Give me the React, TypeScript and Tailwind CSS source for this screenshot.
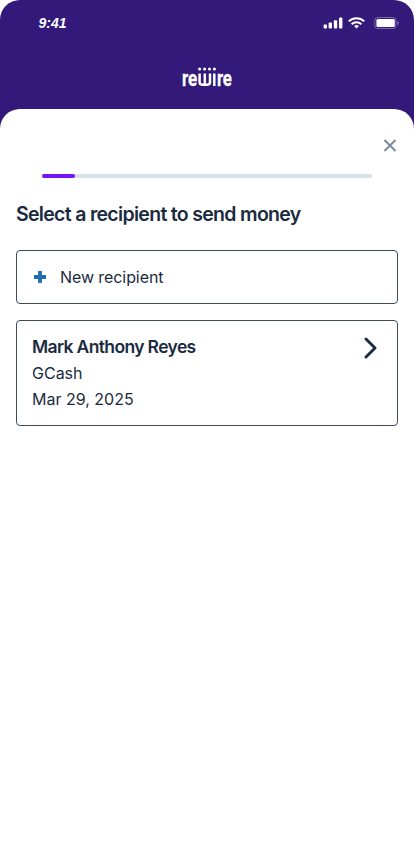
import React from 'react';

const recipients = [
  { id: 1, name: 'Mark Anthony Reyes', method: 'GCash', date: 'Mar 29, 2025' },
];

const StatusBar = () => (
  <div className="flex h-[46px] items-center justify-between pl-[38.5px] pr-[14px]">
    <span className="font-['Liberation_Sans'] text-[14px] font-bold italic leading-none text-white">9:41</span>
    <div className="flex items-center">
      <svg className="mr-[5px]" width="20" height="12" viewBox="0 0 20 12" fill="white">
        <rect x="0.6" y="7.5" width="3.4" height="4" rx="0.9" />
        <rect x="5.6" y="5.6" width="3.4" height="5.9" rx="0.9" />
        <rect x="10.8" y="3.3" width="3.4" height="8.2" rx="0.9" />
        <rect x="16" y="0.5" width="3.4" height="11" rx="0.9" />
      </svg>
      <svg className="mr-[9px]" width="17" height="12" viewBox="0 0 17 12" fill="none" stroke="white">
        <path d="M.8 4.3a11 11 0 0 1 15.4 0" strokeWidth="2" />
        <path d="M3.6 7.2a7 7 0 0 1 9.8 0" strokeWidth="1.9" />
        <path d="m8.5 11.5-2.4-2.4a3.6 3.6 0 0 1 4.8 0Z" fill="white" stroke="none" />
      </svg>
      <svg width="26" height="12" viewBox="0 0 26 12">
        <rect x="0.8" y="0.5" width="21.2" height="11" rx="3" fill="none" stroke="white" strokeOpacity="0.35" />
        <rect x="2.4" y="2" width="18.4" height="8" rx="1.5" fill="white" />
        <path d="M23.3 4v4c.9-.3 1.4-1.1 1.4-2s-.5-1.7-1.4-2Z" fill="white" fillOpacity="0.4" />
      </svg>
    </div>
  </div>
);

const Logo = () => (
  <svg
    className="mx-auto mt-[14px] block font-['Roboto']"
    width="60"
    height="34"
    viewBox="-4 -4 60 34"
    fill="white"
    role="img"
    aria-label="rewire"
  >
    <text x="1" y="22" fontSize="22.5" fontWeight="700" textLength="15.2" lengthAdjust="spacingAndGlyphs" stroke="white" strokeWidth="0.3">re</text>
    <path d="M18.6 9.5v8.6q0 2.6 2.6 2.6h5.2q2.6 0 2.6-2.6V9.5M23.8 9.5v11M33.3 9.5V22" fill="none" stroke="white" strokeWidth="2.5" />
    <circle cx="18.6" cy="5" r="1.5" />
    <circle cx="23.6" cy="5" r="1.5" />
    <circle cx="28.5" cy="5" r="1.5" />
    <circle cx="33.4" cy="5" r="1.5" />
    <text x="35.9" y="22" fontSize="22.5" fontWeight="700" textLength="15" lengthAdjust="spacingAndGlyphs" stroke="white" strokeWidth="0.3">re</text>
  </svg>
);

export default function App() {
  return (
    <div className="min-h-screen bg-white font-['Inter'] text-[#1b2b3f]">
      <div className="flex min-h-screen flex-col rounded-t-[20px] bg-[#32197a]">
        <header className="h-[109px]">
          <StatusBar />
          <Logo />
        </header>

        <main className="flex-1 rounded-t-[20px] bg-white px-4 pt-[30px]">
          <button className="ml-auto mr-[2px] block" aria-label="Close">
            <svg width="12" height="13" viewBox="0 0 12 13" fill="none" stroke="#7b8ba1" strokeWidth="2">
              <path d="m.5 1 11 11M11.5 1l-11 11" />
            </svg>
          </button>

          <div className="mx-[26px] mt-[22px] h-1 rounded-full bg-[#d9e0e9]">
            <div className="h-1 w-[33px] rounded-full bg-[#7414fb]" />
          </div>

          <h1 className="mt-[22px] text-[19.5px] font-semibold leading-7 tracking-[-0.69px]">
            Select a recipient to send money
          </h1>

          <button className="mt-[22px] flex h-[54px] w-full items-center rounded border border-[#3c4b60] pl-[17px]">
            <svg width="12" height="12" viewBox="0 0 12 12" stroke="#216cab" strokeWidth="3.8">
              <path d="M6 0v12M0 6h12" />
            </svg>
            <span className="ml-[14px] text-[16px] leading-6 tracking-[-0.08px]">New recipient</span>
          </button>

          {recipients.map((recipient) => (
            <button
              key={recipient.id}
              className="mt-4 flex h-[106px] w-full items-start justify-between rounded border border-[#3c4b60] pl-[15px] pr-5 pt-[13px] text-left"
            >
              <div className="text-[16px] leading-[26px]">
                <p className="text-[17.5px] font-semibold tracking-[-0.64px]">{recipient.name}</p>
                <p>{recipient.method}</p>
                <p>{recipient.date}</p>
              </div>
              <svg
                className="mt-[3px]"
                width="13"
                height="22"
                viewBox="0 0 13 22"
                fill="none"
                stroke="#1b2b3f"
                strokeWidth="2.9"
                strokeLinecap="round"
                strokeLinejoin="round"
              >
                <path d="m2 2 9 9-9 9" />
              </svg>
            </button>
          ))}
        </main>
      </div>
    </div>
  );
}
